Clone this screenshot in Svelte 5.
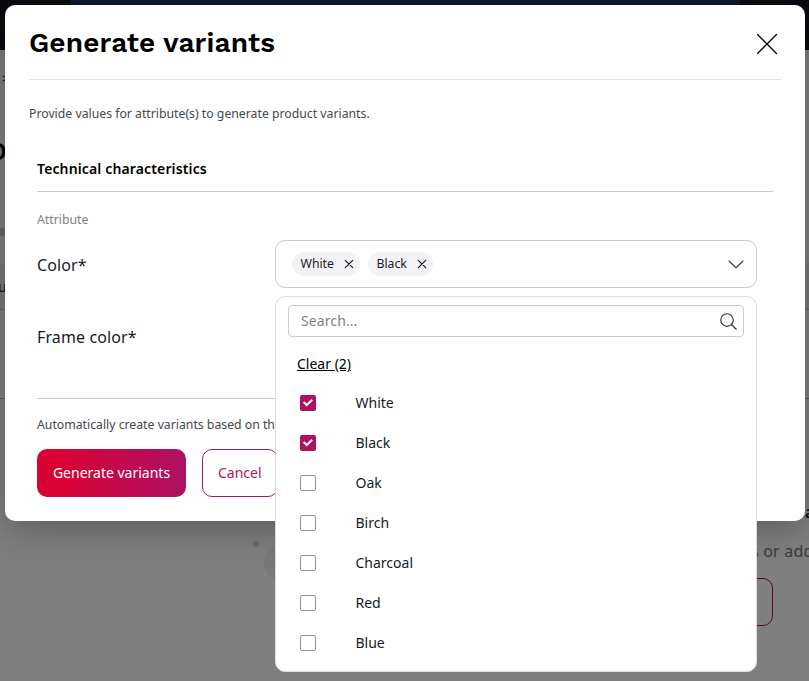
<script>
  let options = $state([
    { name: 'White', checked: true },
    { name: 'Black', checked: true },
    { name: 'Oak', checked: false },
    { name: 'Birch', checked: false },
    { name: 'Charcoal', checked: false },
    { name: 'Red', checked: false },
    { name: 'Blue', checked: false }
  ]);
  const selected = $derived(options.filter((o) => o.checked));
</script>

<div class="screen">
  <div class="page">
    <div class="topbar"><div class="topbar-search"></div></div>
    <div class="crumb">&gt;</div>
    <div class="page-title">o</div>
    <div class="badge"></div>
    <div class="tabs"><span>u</span></div>
    <div class="rule"></div>
    <div class="art"><i class="dot"></i><i class="disc"></i></div>
    <div class="empty-title">a</div>
    <div class="empty-text">s or add</div>
    <div class="empty-button"></div>
  </div>
  <div class="scrim"></div>

  <section class="modal">
    <header>
      <h1>Generate variants</h1>
      <svg width="22" height="22" viewBox="0 0 22 22"><path d="M1.5 1.5 20.5 20.5M20.5 1.5 1.5 20.5" fill="none" stroke="#000" stroke-width="1.3" stroke-linecap="round" /></svg>
    </header>
    <p class="intro">Provide values for attribute(s) to generate product variants.</p>
    <div class="body">
      <h2>Technical characteristics</h2>
      <div class="caption">Attribute</div>
      <div class="field">
        <span class="label">Color*</span>
        <div class="control">
          <div class="select">
            {#each selected as item (item.name)}
              <button class="chip" onclick={() => (item.checked = false)}>
                {item.name}
                <svg width="10" height="10" viewBox="0 0 10 10"><path d="M1.3 1.3 8.7 8.7M8.7 1.3 1.3 8.7" fill="none" stroke="#131c26" stroke-width="1.2" stroke-linecap="round" /></svg>
              </button>
            {/each}
            <svg class="chevron" width="16" height="9" viewBox="0 0 16 9"><path d="M1 1 8 7.8 15 1" fill="none" stroke="#42474d" stroke-width="1.2" stroke-linecap="round" stroke-linejoin="round" /></svg>
          </div>
          <div class="dropdown">
            <div class="search">
              <span>Search...</span>
              <svg width="17" height="17" viewBox="0 0 17 17"><circle cx="7" cy="7" r="6.3" fill="none" stroke="#30363e" stroke-width="1.15" /><path d="M11.5 11.5 16.2 16.2" stroke="#30363e" stroke-width="1.25" stroke-linecap="round" /></svg>
            </div>
            <div class="clear">Clear ({selected.length})</div>
            {#each options as item (item.name)}
              <label class="option">
                <input type="checkbox" bind:checked={item.checked} />
                <span class="box" class:on={item.checked}>
                  {#if item.checked}
                    <svg width="16" height="16" viewBox="0 0 16 16"><path d="M3.6 7.1 6.7 10 12.2 4.7" fill="none" stroke="#fff" stroke-width="2" /></svg>
                  {/if}
                </span>
                {item.name}
              </label>
            {/each}
          </div>
        </div>
      </div>
      <div class="field second"><span class="label">Frame color*</span></div>
      <div class="footer">
        <p>Automatically create variants based on the</p>
        <div class="actions">
          <button class="btn primary">Generate variants</button>
          <button class="btn secondary">Cancel</button>
        </div>
      </div>
    </div>
  </section>
</div>

<style>
  :global(body) { margin: 0; }
  .screen, .screen * { box-sizing: border-box; }
  .screen { position: relative; width: 809px; height: 681px; overflow: hidden; font-family: "Noto Sans", sans-serif; color: #131c26; background: #fff; }
  button { font-family: inherit; margin: 0; cursor: pointer; }
  p, h1, h2 { margin: 0; }

  .page { position: relative; height: 681px; }
  .topbar { height: 50px; background: #10151f; display: flex; padding: 0 69px 0 70px; }
  .topbar-search { flex: 1; height: 40px; background: #1a3454; }
  .crumb, .page-title, .badge, .tabs, .rule, .art, .empty-title, .empty-text, .empty-button { position: absolute; }
  .crumb { left: 2px; top: 70px; font-size: 12px; line-height: 18px; }
  .page-title { left: -13px; top: 126px; font: 500 34px/44px "Work Sans", sans-serif; color: #000; }
  .badge { left: -10px; top: 228px; width: 16px; height: 8px; border-radius: 4px; background: #c8d2d1; }
  .tabs { left: 0; top: 263px; width: 809px; height: 47px; background: #f3f3f5; border-bottom: 1px solid #c9c9ce; font-size: 14px; line-height: 47px; }
  .tabs span { margin-left: -2px; }
  .rule { left: 0; top: 398px; width: 809px; height: 1px; background: #b5b5ba; }
  .art { left: 253px; top: 541px; }
  .dot { display: block; width: 6px; height: 6px; border-radius: 50%; background: #d5d5d8; }
  .disc { display: block; width: 38px; height: 38px; margin: -3px 0 0 11px; border-radius: 50%; background: #f0f0f4; }
  .empty-title { left: 805px; top: 500px; font-size: 16px; line-height: 24px; font-weight: 600; }
  .empty-text { left: 751px; top: 539px; font-size: 16px; line-height: 24px; letter-spacing: .2px; color: #71797f; white-space: nowrap; }
  .empty-button { left: 600px; top: 578px; width: 173px; height: 48px; border: 1px solid #ae1164; border-radius: 10px; }
  .scrim { position: absolute; inset: 0; background: rgba(0, 0, 0, .5); }

  .modal { position: absolute; left: 5px; top: 5px; width: 800px; height: 516px; padding: 0 24px; border-radius: 10px; background: #fff; box-shadow: 0 8px 38px rgba(0, 0, 0, .28); }
  header { display: flex; justify-content: space-between; align-items: center; height: 75px; padding: 3px 3px 0 0; border-bottom: 1px solid #e4e4e7; }
  h1 { padding-bottom: 2px; font: 600 28px/36px "Work Sans", Inter, sans-serif; letter-spacing: .12px; color: #000; white-space: nowrap; }
  .intro { margin-top: 25px; font-size: 12.25px; line-height: 18px; color: #42474d; }
  .body { padding: 0 8px; }
  h2 { margin-top: 29px; height: 40px; border-bottom: 1px solid #ccccd0; font-size: 14px; line-height: 32px; font-weight: 600; letter-spacing: .14px; padding-top: 1px; color: #000; }
  .caption { margin-top: 19px; font-size: 12.25px; line-height: 18px; color: #808080; }
  .field { display: flex; align-items: center; height: 48px; margin-top: 11px; font-size: 16px; line-height: 24px; letter-spacing: .12px; }
  .second { margin-top: 24px; }
  .label { width: 238px; padding-top: 2px; }
  .control { position: relative; width: 482px; letter-spacing: 0; }
  .select { display: flex; align-items: center; gap: 8px; height: 48px; padding: 0 12.5px 0 16px; border: 1px solid #ccccd0; border-radius: 10px; }
  .chip { display: flex; align-items: center; gap: 10px; height: 24px; padding: 0 6px 0 8.5px; border: 0; border-radius: 12px; background: #f3f3f5; color: #131c26; font-size: 12.25px; line-height: 24px; }
  .chevron { margin-left: auto; }
  .dropdown { position: absolute; left: 0; top: 56px; z-index: 2; width: 482px; height: 376px; padding: 8px 12px; border: 1px solid #dbdbe4; border-radius: 10px; background: #fff; }
  .search { display: flex; align-items: center; justify-content: space-between; height: 32px; padding: 0 6.5px 0 12px; border: 1px solid #ccccd0; border-radius: 4px; color: #808080; font-size: 14px; letter-spacing: .1px; }
  .clear { margin: 16px 0 0 9px; font-size: 14px; line-height: 22px; text-decoration: underline; color: #000; height: 30px; }
  .option { display: flex; align-items: center; height: 40px; padding-left: 12px; font-size: 14px; line-height: 20px; }
  .option input { position: absolute; opacity: 0; pointer-events: none; }
  .box { display: flex; width: 16px; height: 16px; margin-right: 39.5px; border: 1px solid #929299; border-radius: 2px; background: #fff; }
  .box.on { border: 0; background: #ae1164; }
  .footer { width: 600px; margin-top: 38px; border-top: 1px solid #ccccd0; padding-top: 17px; }
  .footer p { font-size: 12.25px; line-height: 18px; color: #42474d; }
  .actions { display: flex; gap: 16px; margin-top: 15px; }
  .btn { height: 48px; padding: 0 15px; border: 1px solid #ae1164; border-radius: 10px; background: #fff; color: #ae1164; font-size: 14px; line-height: 22px; }
  .primary { width: 149px; border: 0; background: linear-gradient(90deg, #db0032, #db0032 10%, #ae1164); color: #fff; }
</style>
